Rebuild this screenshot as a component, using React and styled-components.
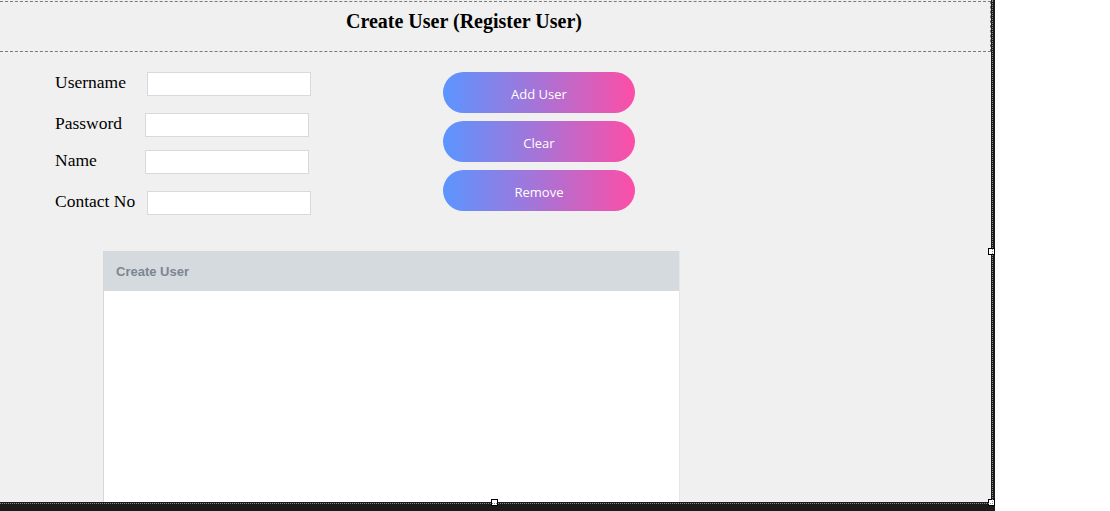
import React from 'react';
import styled, { createGlobalStyle } from 'styled-components';

const GlobalStyle = createGlobalStyle`
  html, body {
    margin: 0;
    padding: 0;
    background: #ffffff;
  }
  * { box-sizing: border-box; }
`

const fields = [
    { label: 'Username', offset: 92, gap: 0 },
    { label: 'Password', offset: 90, gap: 17 },
    { label: 'Name', offset: 90, gap: 13 },
    { label: 'Contact No', offset: 92, gap: 17 },
];

const buttons = ['Add User', 'Clear', 'Remove'];

const App = () => {
    return (
        <Page>
            <GlobalStyle />
            <Designer>
                <Form>
                    <Header>
                        <Title>Create User (Register User)</Title>
                    </Header>
                    <TopRow>
                        <Fields>
                            {fields.map(f =>
                                <FieldRow key={f.label} gap={f.gap}>
                                    <Label offset={f.offset}>{f.label}</Label>
                                    <Input type="text" />
                                </FieldRow>
                            )}
                        </Fields>
                        <Buttons>
                            {buttons.map(b => <GradientButton key={b}>{b}</GradientButton>)}
                        </Buttons>
                    </TopRow>
                    <Grid>
                        <GridHeader>Create User</GridHeader>
                        <GridBody />
                    </Grid>
                </Form>
                <Handle style={{ right: 0, top: 248 }} />
                <Handle style={{ right: 0, bottom: 5 }} />
                <Handle style={{ left: 491, bottom: 5 }} />
            </Designer>
        </Page>
    )
}

const Page = styled.div`
    width: 1110px;
    height: 511px;
    display: flex;
    align-items: flex-start;
    background: #ffffff;
    overflow: hidden;
`
const Designer = styled.div`
    position: relative;
    width: 995px;
    height: 511px;
    background: #1b1b1b;
    padding: 0 4px 9px 0;
    &::after {
        content: '';
        position: absolute;
        left: 0;
        top: 0;
        right: 2px;
        bottom: 7px;
        border-right: 1px dotted #8a8a8a;
        border-bottom: 1px dotted #8a8a8a;
        pointer-events: none;
    }
`
const Form = styled.div`
    width: 991px;
    height: 502px;
    background: #f0f0f0;
    display: flex;
    flex-direction: column;
    overflow: hidden;
`
const Header = styled.div`
    height: 51px;
    border-top: 1px dashed #7a7a7a;
    border-bottom: 1px dashed #7a7a7a;
    border-right: 1px dashed #7a7a7a;
    margin-top: 1px;
    display: flex;
    justify-content: center;
    padding-top: 8px;
    padding-right: 62px;
`
const Title = styled.h1`
    margin: 0;
    font-family: "Liberation Serif", serif;
    font-weight: bold;
    font-size: 20px;
    color: #000;
`
const TopRow = styled.div`
    height: 163px;
    display: flex;
    padding: 20px 0 0 55px;
`
const Fields = styled.div`
    width: 388px;
    display: flex;
    flex-direction: column;
`
const FieldRow = styled.div`
    display: flex;
    align-items: center;
    height: 24px;
    margin-top: ${({gap}) => gap}px;
`
const Label = styled.label`
    width: ${({offset}) => offset}px;
    font-family: "Liberation Serif", serif;
    font-size: 17.5px;
    color: #000;
    margin-top: -3px;
`
const Input = styled.input`
    width: 164px;
    height: 24px;
    border: 1px solid #d6dadf;
    background: #ffffff;
    outline: none;
    padding: 0 4px;
`
const Buttons = styled.div`
    display: flex;
    flex-direction: column;
    gap: 8px;
`
const GradientButton = styled.button`
    width: 192px;
    height: 41px;
    border: none;
    border-radius: 21px;
    background: linear-gradient(90deg, #5b95ff 0%, #a873d6 50%, #fd4ea6 100%);
    color: #ffffff;
    font-family: "Open Sans", sans-serif;
    font-size: 13px;
    cursor: pointer;
    padding: 2px 0 0;
`
const Grid = styled.div`
    margin: 36px 0 0 103px;
    width: 577px;
    flex: 1;
    display: flex;
    flex-direction: column;
    border-left: 1px solid #d8d8d8;
    border-right: 1px solid #e6e6e6;
`
const GridHeader = styled.div`
    height: 40px;
    background: #d5dadf;
    display: flex;
    align-items: center;
    padding-left: 12px;
    font-family: "Liberation Sans", sans-serif;
    font-weight: bold;
    font-size: 13px;
    color: #7b8692;
`
const GridBody = styled.div`
    flex: 1;
    background: #ffffff;
`
const Handle = styled.span`
    position: absolute;
    width: 7px;
    height: 7px;
    background: #ffffff;
    border: 1px solid #000;
`

export default App
